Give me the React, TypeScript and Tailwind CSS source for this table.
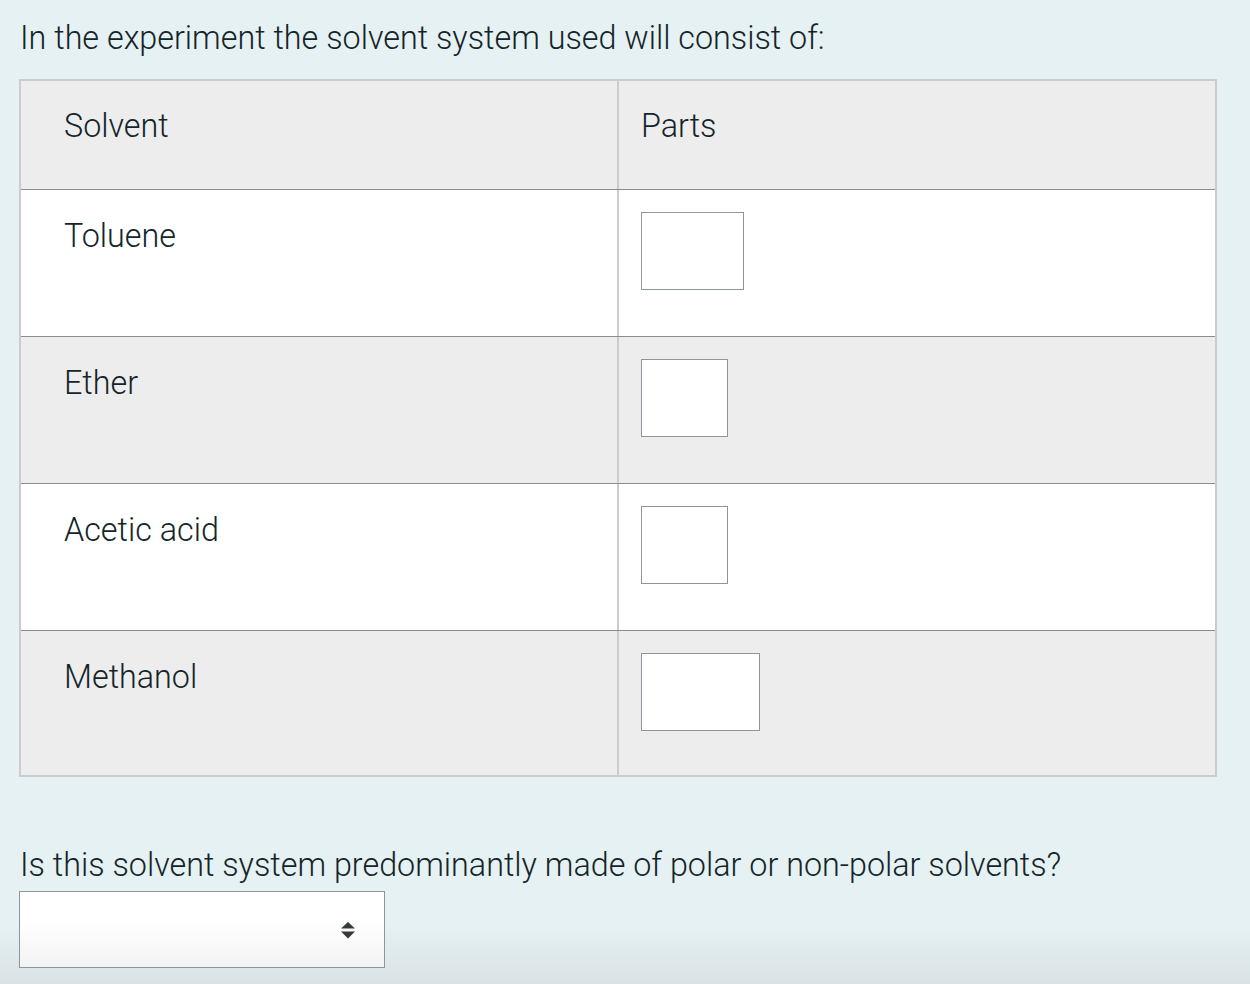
const rows = [
  { name: "Toluene", inputW: "w-[103px]", bg: "bg-white", h: "h-[147px]" },
  { name: "Ether", inputW: "w-[87px]", bg: "bg-[#ededed]", h: "h-[147px]" },
  { name: "Acetic acid", inputW: "w-[87px]", bg: "bg-white", h: "h-[147px]" },
  { name: "Methanol", inputW: "w-[119px]", bg: "bg-[#ededed]", h: "h-[144px]" }
]

export default function App() {
  return (
    <div
      className="min-h-screen bg-[linear-gradient(to_bottom,#e6f1f3_94%,#d9e3e5_100%)] px-[19px] pt-[14px] pb-4 text-[#14252a] font-light"
      style={{ fontFamily: "Roboto, 'Liberation Sans', sans-serif" }}
    >
      <p className="pl-px text-[32.3px] leading-[48px]">In the experiment the solvent system used will consist of:</p>

      <div className="mt-[17px] w-[1198px] border-2 border-[#cccccc]">
        <div className="flex h-[109px] border-b border-[#8c8c8c] bg-[#ededed]">
          <div className="w-[598px] border-r-2 border-[#cccccc] pl-[43px] pt-[21px] text-[32.3px] leading-[48px]">Solvent</div>
          <div className="flex-1 pl-[22px] pt-[21px] text-[32.3px] leading-[48px]">Parts</div>
        </div>

        {rows.map((row, i) => (
          <div
            key={row.name}
            className={`flex ${row.h} ${row.bg} ${i < rows.length - 1 ? "border-b border-[#8c8c8c]" : ""}`}
          >
            <div className="w-[598px] border-r-2 border-[#cccccc] pl-[43px] pt-[22px] text-[32.3px] leading-[48px]">
              {row.name}
            </div>
            <div className="flex-1 pl-[22px] pt-[22px]">
              <div className={`${row.inputW} h-[78px] border border-[#8f959e] bg-white`}></div>
            </div>
          </div>
        ))}
      </div>

      <p className="mt-[64px] pl-px text-[32.3px] leading-[48px]">
        Is this solvent system predominantly made of polar or non-polar solvents?
      </p>

      <div className="mt-[2px] flex h-[77px] w-[366px] items-center justify-end border border-[#8f959e] bg-[linear-gradient(to_bottom,#ffffff_40%,#f3f3f3_100%)] pr-[29px]">
        <svg width="14" height="17" viewBox="0 0 14 17" className="mt-[1px]">
          <polygon points="7,0 14,6.5 0,6.5" fill="#333a3e" />
          <polygon points="0,9.5 14,9.5 7,16.5" fill="#333a3e" />
        </svg>
      </div>
    </div>
  )
}
